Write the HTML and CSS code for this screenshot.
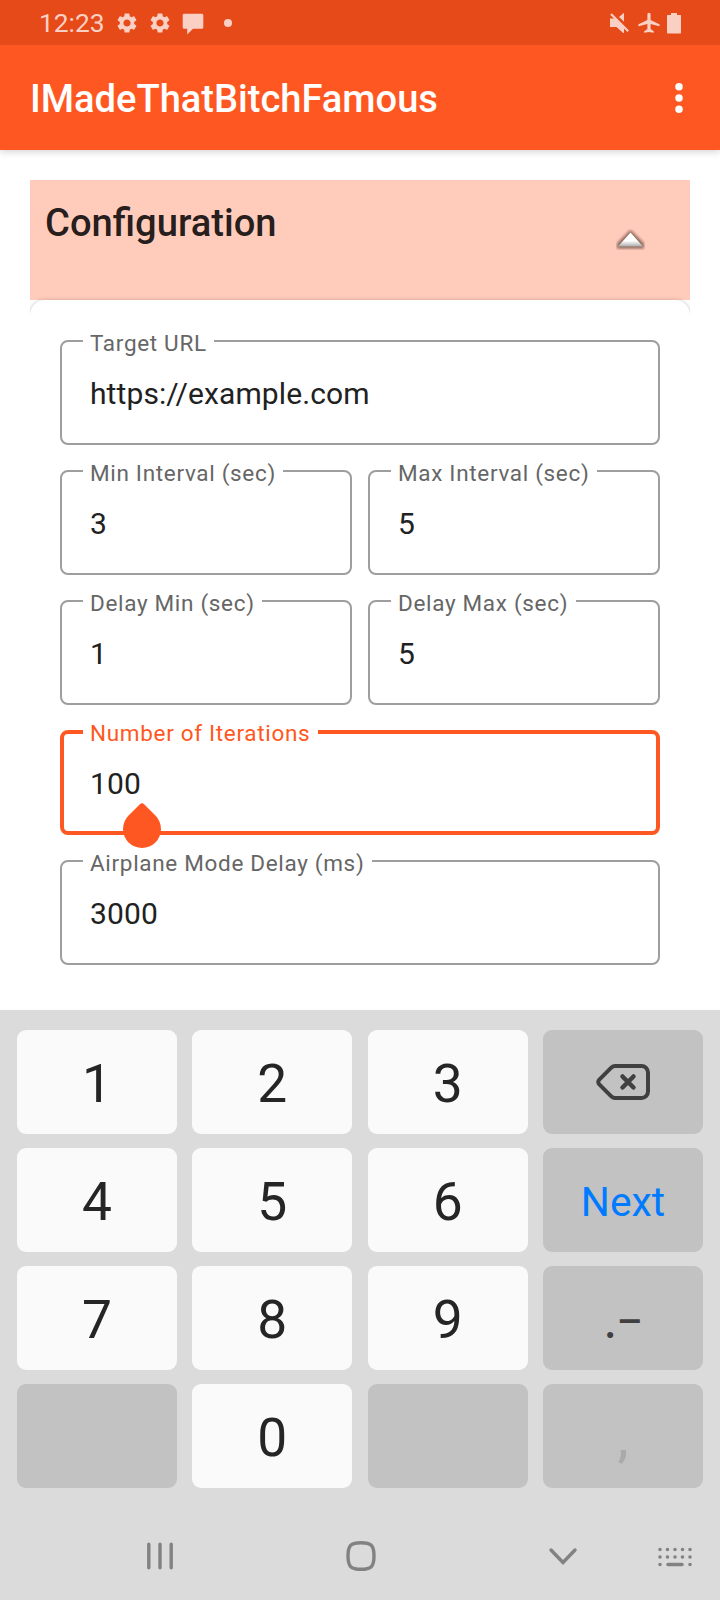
FILE: index.html
```html
<!DOCTYPE html>
<html lang="en">
<head>
<meta charset="utf-8">
<title>IMadeThatBitchFamous</title>
<link rel="stylesheet" href="styles.css">
</head>
<body>
<div class="screen">
  <div class="status">
    <span class="clock">12:23</span>
    <svg class="gear" width="24" height="24" viewBox="0 0 24 24"><path d="M19.14 12.94c.04-.3.06-.61.06-.94 0-.32-.02-.64-.07-.94l2.03-1.58a.49.49 0 0 0 .12-.61l-1.92-3.32a.488.488 0 0 0-.59-.22l-2.39.96c-.5-.38-1.03-.7-1.62-.94l-.36-2.54a.484.484 0 0 0-.48-.41h-3.84c-.24 0-.43.17-.47.41l-.36 2.54c-.59.24-1.13.57-1.62.94l-2.39-.96c-.22-.08-.47 0-.59.22L2.74 8.87c-.12.21-.08.47.12.61l2.03 1.58c-.05.3-.09.63-.09.94s.02.64.07.94l-2.03 1.58a.49.49 0 0 0-.12.61l1.92 3.32c.12.22.37.29.59.22l2.39-.96c.5.38 1.03.7 1.62.94l.36 2.54c.05.24.24.41.48.41h3.84c.24 0 .44-.17.47-.41l.36-2.54c.59-.24 1.13-.56 1.62-.94l2.39.96c.22.08.47 0 .59-.22l1.92-3.32c.12-.22.07-.47-.12-.61l-2.01-1.58zM12 15.6c-1.98 0-3.6-1.62-3.6-3.6s1.62-3.6 3.6-3.6 3.6 1.62 3.6 3.6-1.62 3.6-3.6 3.6z"/></svg>
    <svg class="gear" width="24" height="24" viewBox="0 0 24 24"><path d="M19.14 12.94c.04-.3.06-.61.06-.94 0-.32-.02-.64-.07-.94l2.03-1.58a.49.49 0 0 0 .12-.61l-1.92-3.32a.488.488 0 0 0-.59-.22l-2.39.96c-.5-.38-1.03-.7-1.62-.94l-.36-2.54a.484.484 0 0 0-.48-.41h-3.84c-.24 0-.43.17-.47.41l-.36 2.54c-.59.24-1.13.57-1.62.94l-2.39-.96c-.22-.08-.47 0-.59.22L2.74 8.87c-.12.21-.08.47.12.61l2.03 1.58c-.05.3-.09.63-.09.94s.02.64.07.94l-2.03 1.58a.49.49 0 0 0-.12.61l1.92 3.32c.12.22.37.29.59.22l2.39-.96c.5.38 1.03.7 1.62.94l.36 2.54c.05.24.24.41.48.41h3.84c.24 0 .44-.17.47-.41l.36-2.54c.59-.24 1.13-.56 1.62-.94l2.39.96c.22.08.47 0 .59-.22l1.92-3.32c.12-.22.07-.47-.12-.61l-2.01-1.58zM12 15.6c-1.98 0-3.6-1.62-3.6-3.6s1.62-3.6 3.6-3.6 3.6 1.62 3.6 3.6-1.62 3.6-3.6 3.6z"/></svg>
    <svg class="chat" width="22" height="22" viewBox="0 0 22 22"><path d="M2.200.7h17.600c.9 0 1.500.6 1.500 1.500v12c0 .9-.6 1.500-1.500 1.500H11L5.200 21.600v-5.900h-3C1.300 15.700.7 15.100.7 14.200v-12C.7 1.300 1.300.7 2.200.7z"/></svg>
    <i class="dot"></i>
    <svg class="mute" width="20" height="22" viewBox="0 0 20 22"><path d="M0 6.500h4.500l9.500 9V21h-.8L6.500 15H0zM9 5 14 .8V9.800z"/><path class="gap" d="M1.800 0 19 17.200"/><path class="slash" d="M1 2 18.200 19.200"/></svg>
    <svg class="plane" width="22" height="22" viewBox="0 0 22 22"><path d="M11 .8c1 0 1.600.9 1.600 2v5.300l8.800 4.200c.4.800.3 1.500-.1 2L12.600 12v5l3.100 2.200c.3.500.3 1 0 1.500L11 19.900l-4.700.8c-.3-.5-.3-1 0-1.500L9.400 17v-5L.7 14.300c-.4-.5-.5-1.200-.1-2l8.800-4.200V2.800c0-1.100.6-2 1.600-2z"/></svg>
    <svg class="batt" width="14" height="22" viewBox="0 0 14 22"><path d="M4 .9h6v2h3c.6 0 1 .4 1 1v16.600c0 .6-.4 1-1 1H1c-.6 0-1-.4-1-1V3.900c0-.6.4-1 1-1h3z"/></svg>
  </div>
  <header class="appbar">
    <h1 class="title">IMadeThatBitchFamous</h1>
    <svg class="more" width="8" height="32" viewBox="0 0 8 32"><circle cx="4" cy="4.800" r="3.750"/><circle cx="4" cy="16" r="3.750"/><circle cx="4" cy="27.200" r="3.750"/></svg>
  </header>
  <main class="content">
    <div class="section">
      <h2 class="heading">Configuration</h2>
      <svg class="collapse" width="29" height="21" viewBox="0 0 29 21">
        <defs>
          <linearGradient id="tri" x1="0" y1="0" x2="0" y2="1"><stop offset="0.600" stop-color="#fff"/><stop offset="1" stop-color="#aaa"/></linearGradient>
          <filter id="soft" x="-30%" y="-30%" width="160%" height="160%"><feGaussianBlur stdDeviation="1.500"/></filter>
        </defs>
        <path class="glow" d="M14.500 1 28 14.500V19.500H1V14.500z" filter="url(#soft)"/>
        <path d="M14.500 3.500 27 17.500H2z" fill="url(#tri)"/>
      </svg>
    </div>
    <div class="clip">
      <div class="card">
        <div class="field"><span class="label">Target URL</span><span class="value">https://example.com</span></div>
        <div class="pair">
          <div class="field"><span class="label">Min Interval (sec)</span><span class="value">3</span></div>
          <div class="field"><span class="label">Max Interval (sec)</span><span class="value">5</span></div>
        </div>
        <div class="pair">
          <div class="field"><span class="label">Delay Min (sec)</span><span class="value">1</span></div>
          <div class="field"><span class="label">Delay Max (sec)</span><span class="value">5</span></div>
        </div>
        <div class="field focused"><span class="label">Number of Iterations</span><span class="value">100</span><i class="handle"></i></div>
        <div class="field"><span class="label">Airplane Mode Delay (ms)</span><span class="value">3000</span></div>
      </div>
    </div>
  </main>
  <section class="keyboard">
    <div class="keys">
      <div class="key">1</div><div class="key">2</div><div class="key">3</div>
      <div class="key alt"><svg width="56" height="40" viewBox="0 0 56 40"><path d="M19 4h26.500a6.500 6.500 0 0 1 6.500 6.500v19a6.500 6.500 0 0 1-6.500 6.500H19c-1.500 0-2.500-.5-3.500-1.400L3.300 22.300c-1.400-1.400-1.400-3.200 0-4.600L15.500 5.400C16.500 4.500 17.500 4 19 4z"/><path class="cross" d="M26.500 14.500 37.500 25.500M37.500 14.500 26.500 25.500"/></svg></div>
      <div class="key">4</div><div class="key">5</div><div class="key">6</div><div class="key alt next">Next</div>
      <div class="key">7</div><div class="key">8</div><div class="key">9</div><div class="key alt punct"><span class="period">.</span><span class="dash">–</span></div>
      <div class="key alt"></div><div class="key">0</div><div class="key alt"></div><div class="key alt comma">,</div>
    </div>
    <nav class="nav">
      <svg class="recents" width="32" height="32" viewBox="0 0 32 32"><path d="M4.800 4.200v23.600M16 4.200v23.600M27.200 4.200v23.600"/></svg>
      <svg class="home" width="32" height="32" viewBox="0 0 32 32"><path d="M16 2.700c10 0 13 2.500 13 13.300s-3 13.300-13 13.300S3 26.800 3 16 6 2.700 16 2.700z"/></svg>
      <svg class="down" width="32" height="32" viewBox="0 0 32 32"><path d="M4 10 16 22.500 28 10"/></svg>
      <svg class="ime" width="34" height="32" viewBox="0 0 34 32"><path class="dots" d="M2 9.500h0M9.500 9.500h0M17 9.500h0M24.500 9.500h0M32 9.500h0M2 17h0M9.500 17h0M17 17h0M24.500 17h0M32 17h0M2 24.500h0M32 24.500h0M10 24.500h14"/></svg>
    </nav>
  </section>
</div>
</body>
</html>
```
FILE: styles.css
```css
* { box-sizing: border-box; }
body { margin: 0; font-family: Roboto, sans-serif; background: #fff; }
h1, h2 { margin: 0; font-weight: 500; }
svg { display: block; flex: none; }

.screen { width: 720px; height: 1600px; display: flex; flex-direction: column; overflow: hidden; }

.status { position: relative; z-index: 2; height: 45px; flex: none; background: #e64a19; color: #fad0c5; display: flex; align-items: center; padding: 0 39px; }
.status svg { fill: #fad0c5; }
.clock { font-size: 26.300px; line-height: 30px; width: 76px; }
.gear { margin-right: 9px; }
.chat { margin-top: 2px; }
.gear + .gear { margin-right: 0; }
.gear + .chat { margin-left: 10px; }
.dot { width: 8px; height: 8px; border-radius: 50%; background: #fad0c5; margin-left: 19.500px; }
.mute { margin-left: auto; }
.status .gap { stroke: #e64a19; stroke-width: 2.600; }
.status .slash { stroke: #fad0c5; stroke-width: 2.200; }
.plane { margin-left: 7.500px; }
.batt { margin-left: 7.500px; }

.appbar { position: relative; z-index: 1; height: 105px; flex: none; background: #ff5722; padding: 0 37.500px 0 30px; display: flex; align-items: center; justify-content: space-between; box-shadow: 0 2px 7px rgba(0, 0, 0, .17); }
.title { color: #fff; font-size: 38.100px; line-height: 44px; margin-top: 3px; }
.more { fill: #fff; }

.content { height: 860px; flex: none; padding: 30px 30px 0; overflow: hidden; }
.section { height: 120px; background: #ffccbc; padding: 21px 45px 0 15px; display: flex; justify-content: space-between; }
.heading { font-size: 38.150px; line-height: 45px; color: rgba(0, 0, 0, .87); }
.collapse { margin-top: 28px; }
.glow { fill: rgba(60, 30, 25, .6); }
.clip { clip-path: inset(-12px 0 0 0); }
.card { height: 800px; border-radius: 15px; background: #fff; padding: 40px 30px; display: flex; flex-direction: column; gap: 25px; box-shadow: 0 1px 5px rgba(0, 0, 0, .3); }
.pair { display: grid; grid-template-columns: 1fr 1fr; gap: 16px; }
.field { position: relative; height: 105px; flex: none; border: 2px solid #9e9e9e; border-radius: 8px; padding: 34px 28px 0; }
.label { position: absolute; left: 21px; top: -12px; padding: 0 7.500px 0 7px; background: #fff; color: #666; font-size: 22.500px; line-height: 26px; letter-spacing: .68px; white-space: nowrap; }
.value { display: block; font-size: 30px; line-height: 35px; letter-spacing: .1px; color: #212121; }
.focused { border: 4px solid #ff5722; padding: 32px 26px 0; }
.focused .label { left: 19px; top: -14px; color: #ff5722; }
.handle { position: absolute; left: 59px; top: 76px; width: 38px; height: 38px; background: #ff5722; border-radius: 3px 50% 50% 50%; transform: rotate(45deg); z-index: 1; }

.keyboard { height: 590px; flex: none; background: #dbdbdb; padding: 20px 17px 0; }
.keys { display: grid; grid-template-columns: repeat(4, 160px); grid-auto-rows: 104px; justify-content: space-between; row-gap: 14px; }
.key { border-radius: 9px; background: #fafafa; color: #252525; font-size: 53.300px; line-height: 100px; display: flex; align-items: center; justify-content: center; padding-top: 4px; }
.alt { background: #c2c2c2; color: #404040; }
.alt svg { fill: none; stroke: #404040; stroke-width: 4; margin: -4px 0 0 2px; }
.alt .cross { stroke-linecap: round; stroke-width: 4.500; }
.next { color: #007aff; font-size: 40.800px; padding-top: 4px; }
.period { font-family: Lato, sans-serif; font-size: 48px; padding-left: 1px; }
.dash { font-size: 40px; font-weight: 500; padding: 3px 0 0 1px; }
.comma { color: #aaa; font-size: 50px; font-weight: 500; padding-top: 6px; }

.nav { height: 112px; margin: 0 -17px; padding: 23px 0 0 143.500px; display: flex; align-items: center; }
.nav svg { fill: none; stroke: #828282; stroke-width: 3.400; stroke-linecap: round; }
.home { margin-left: 169px; }
.down { margin-left: 170px; }
.ime { margin-left: 79px; }
.nav .dots { stroke-width: 3.600; }
```
